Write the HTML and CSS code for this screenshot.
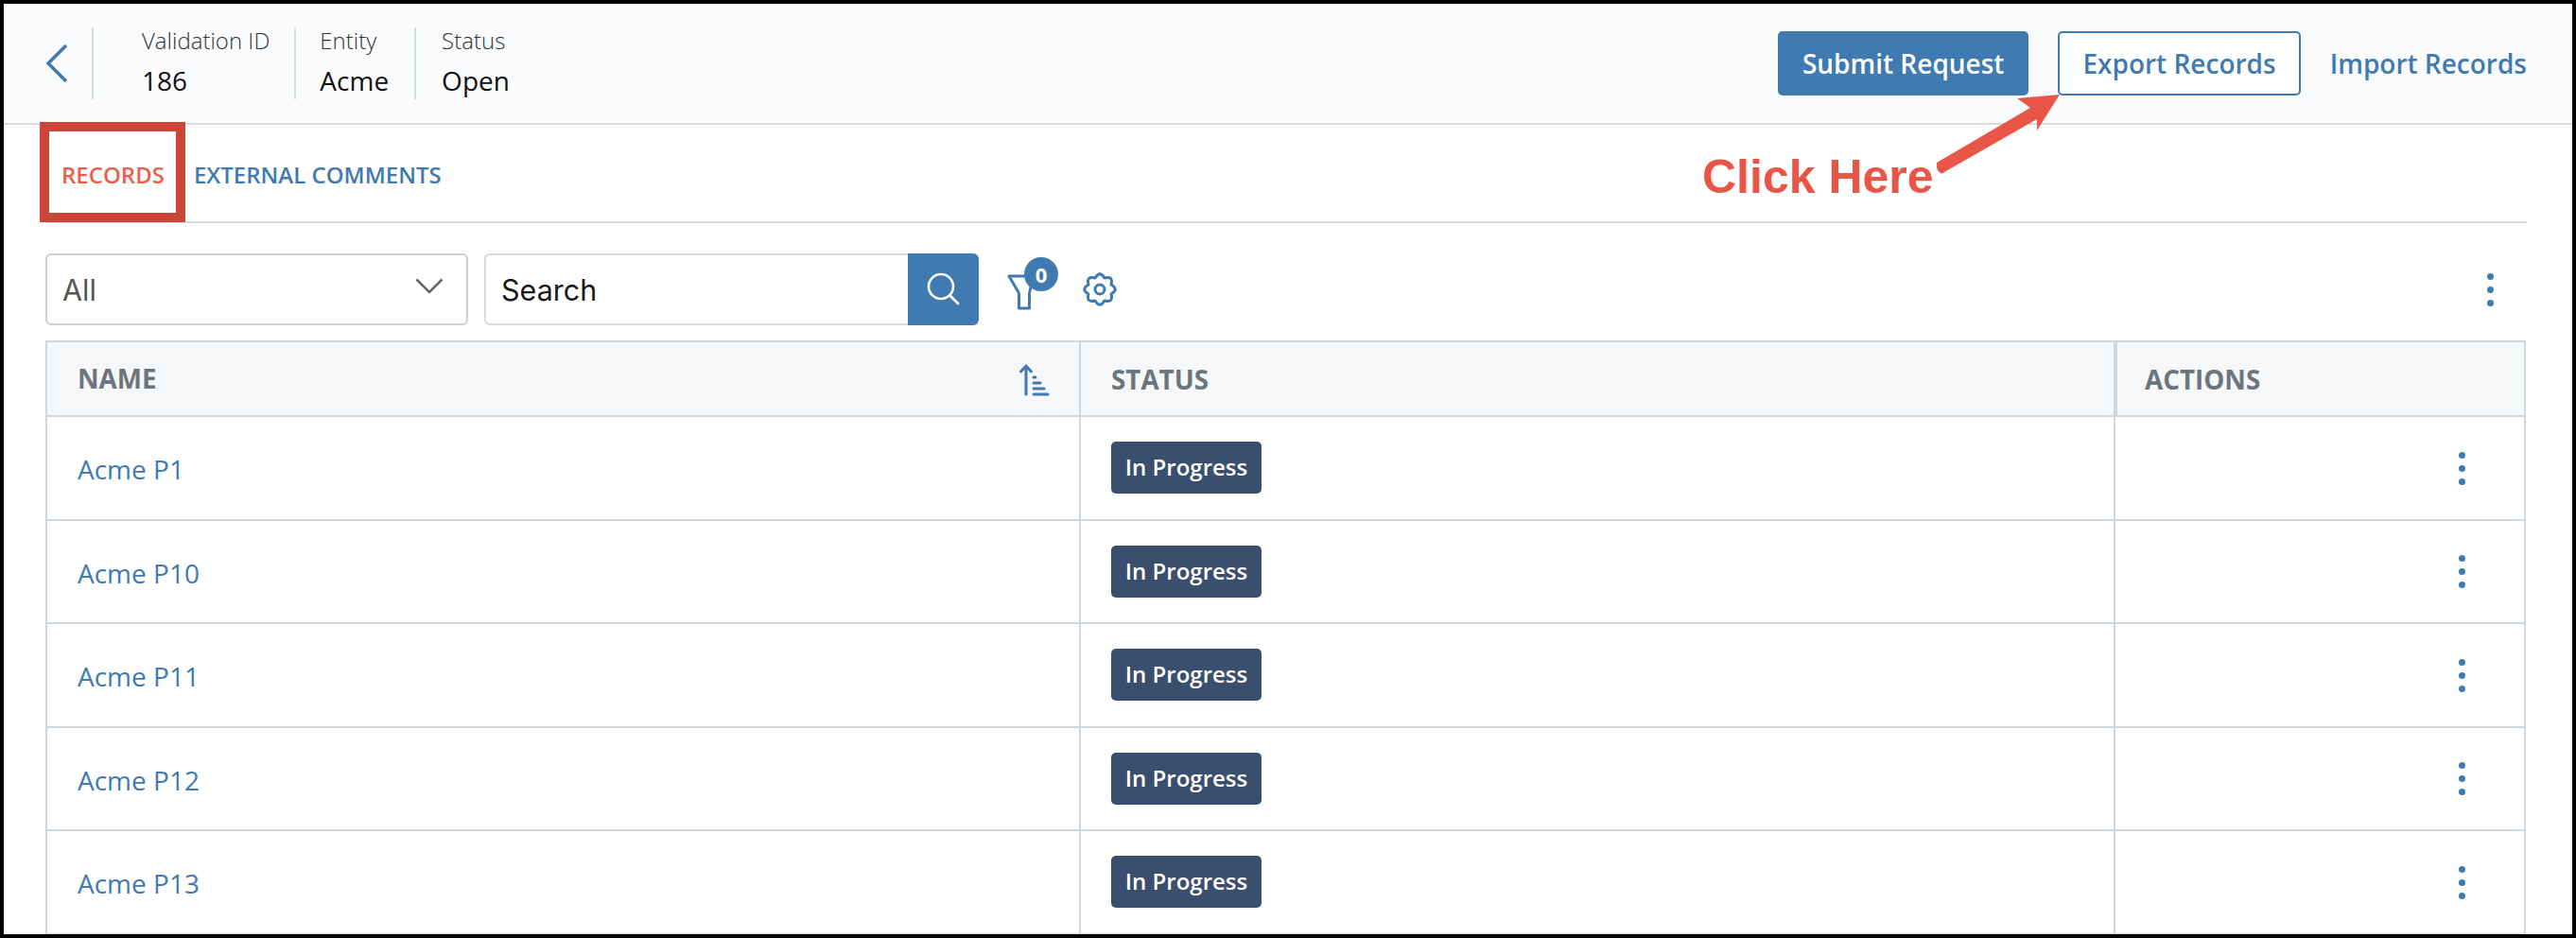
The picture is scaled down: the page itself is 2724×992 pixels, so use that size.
FILE: index.html
```html
<!DOCTYPE html>
<html lang="en">
<head>
<meta charset="utf-8">
<title>Validation 186</title>
<link rel="stylesheet" href="styles.css">
</head>
<body>
<div class="frame">
  <header class="topbar">
    <a class="back" href="#"><svg width="24" height="42" viewBox="0 0 24 42"><path d="M22 2 3 21l19 19" fill="none" stroke="#3f7ab0" stroke-width="3.6"/></svg></a>
    <div class="meta meta-first"><span class="meta-label">Validation ID</span><span class="meta-value">186</span></div>
    <div class="meta"><span class="meta-label">Entity</span><span class="meta-value">Acme</span></div>
    <div class="meta meta-last"><span class="meta-label">Status</span><span class="meta-value">Open</span></div>
    <div class="actions">
      <button class="btn btn-primary">Submit Request</button>
      <button class="btn btn-outline">Export Records</button>
      <a class="btn-link" href="#">Import Records</a>
    </div>
  </header>

  <nav class="tabs">
    <a class="tab tab-active" href="#">RECORDS</a>
    <a class="tab" href="#">EXTERNAL COMMENTS</a>
  </nav>

  <div class="toolbar">
    <div class="select"><span>All</span><svg class="select-caret" width="30" height="17" viewBox="0 0 30 17"><path d="M1.5 1.5 15 15 28.5 1.5" fill="none" stroke="#666" stroke-width="2.6"/></svg></div>
    <div class="search"><div class="search-input">Search</div>
      <button class="search-btn"><svg width="44" height="44" viewBox="0 0 44 44"><circle cx="19" cy="19" r="13" fill="none" stroke="#fff" stroke-width="2.6"/><path d="M28.5 28.5 37 37" stroke="#fff" stroke-width="2.8" stroke-linecap="round"/></svg></button>
    </div>
    <div class="filter">
      <svg width="30" height="38" viewBox="0 0 30 38"><path d="M2 2h26L23.5 20v16h-11V20z" fill="none" stroke="#3f7ab0" stroke-width="3" stroke-linejoin="round"/></svg>
      <span class="filter-badge">0</span>
    </div>
    <svg class="gear" width="40" height="40" viewBox="0 0 40 40" fill="none" stroke="#3f7ab0" stroke-width="3" stroke-linejoin="round"><path d="M24.98 7.99Q20-.5 15.02 7.99 5.500 5.500 7.99 15.02-.5 20 7.99 24.98 5.500 34.500 15.02 32.01 20 40.5 24.98 32.01 34.500 34.500 32.01 24.98 40.5 20 32.01 15.02 34.500 5.500 24.98 7.99Z"/><circle cx="20" cy="20" r="5"/></svg>
    <div class="kebab kebab-tool"><i></i><i></i><i></i></div>
  </div>

  <div class="table">
    <div class="row row-head">
      <div class="cell cell-name">NAME<svg class="sort-icon" width="34" height="34" viewBox="0 0 34 34" fill="none" stroke="#3f7ab0" stroke-linecap="round"><path d="M8 32V2M2.500 8 8 2l5.500 6" stroke-width="3"/><path d="M16 14h2M16 20h7M16 26h11M16 32h15" stroke-width="3"/></svg></div>
      <div class="cell">STATUS</div>
      <div class="cell cell-actions">ACTIONS</div>
    </div>
    <div class="row"><div class="cell"><a href="#">Acme P1</a></div><div class="cell"><span class="pill">In Progress</span></div><div class="cell"><div class="kebab"><i></i><i></i><i></i></div></div></div>
    <div class="row"><div class="cell"><a href="#">Acme P10</a></div><div class="cell"><span class="pill">In Progress</span></div><div class="cell"><div class="kebab"><i></i><i></i><i></i></div></div></div>
    <div class="row"><div class="cell"><a href="#">Acme P11</a></div><div class="cell"><span class="pill">In Progress</span></div><div class="cell"><div class="kebab"><i></i><i></i><i></i></div></div></div>
    <div class="row"><div class="cell"><a href="#">Acme P12</a></div><div class="cell"><span class="pill">In Progress</span></div><div class="cell"><div class="kebab"><i></i><i></i><i></i></div></div></div>
    <div class="row"><div class="cell"><a href="#">Acme P13</a></div><div class="cell"><span class="pill">In Progress</span></div><div class="cell"><div class="kebab"><i></i><i></i><i></i></div></div></div>
  </div>

  <div class="note-box"></div>
  <div class="note-text">Click Here</div>
  <svg class="note-arrow" width="150" height="100" viewBox="0 0 150 100"><path d="M134 4 89 8 103 18 4 76Q3 84 8 87Q10 88 12 86L110 30 110 42Z" fill="#e95546"/></svg>
</div>
</body>
</html>
```
FILE: styles.css
```css
* { box-sizing: border-box; }
html, body { margin: 0; padding: 0; background: #fff; }
body { font-family: "Open Sans", sans-serif; }
a { text-decoration: none; color: #3f7ab0; }

.frame {
  position: relative;
  width: 2724px;
  height: 992px;
  border: 4px solid #000;
  overflow: hidden;
  background: #fff;
}

/* top bar */
.topbar {
  display: flex;
  align-items: center;
  height: 128px;
  padding: 0 48px 0 44px;
  background: #fafbfd;
  border-bottom: 2px solid #d5dcdf;
}
.back { display: flex; width: 49px; }
.meta {
  display: flex;
  flex-direction: column;
  justify-content: flex-start;
  height: 76px;
  padding: 0 27px 0 25px;
  border-left: 2px solid #d5dcdf;
}
.meta-first { padding: 0 26px 0 51px; }
.meta-last { padding-left: 27px; }
.meta-label { margin-top: -3px; font-size: 24px; font-weight: 300; line-height: 33px; color: #333; }
.meta-value { margin-top: 7px; font-size: 28px; font-weight: 400; line-height: 38px; color: #111; }
.actions { display: flex; align-items: center; gap: 31px; margin-left: auto; }
.btn {
  height: 68px;
  padding: 0 24px;
  border-radius: 5px;
  border: 2px solid #3f7ab0;
  font: 600 28px "Open Sans", sans-serif;
}
.btn-primary { background: #3f7ab0; color: #fff; }
.btn-outline { background: #fff; color: #3f7ab0; }
.btn-link { font-size: 28px; font-weight: 600; color: #3f7ab0; }

/* tabs */
.tabs {
  display: flex;
  align-items: center;
  gap: 31px;
  height: 104px;
  margin: 0 48px 0 44px;
  padding: 2px 0 0 17px;
  border-bottom: 2px solid #d5dcdf;
}
.tab { font-size: 24px; font-weight: 600; color: #3f7ab0; }
.tab-active { color: #e95f4c; }

/* toolbar */
.toolbar { display: flex; align-items: center; height: 76px; margin: 32px 48px 16px 44px; }
.select {
  display: flex;
  align-items: center;
  justify-content: space-between;
  width: 447px;
  height: 76px;
  padding: 0 24px 0 16px;
  border: 2px solid #c9cfd3;
  border-radius: 6px;
  font: 400 30.5px "Inter", sans-serif;
  color: #555;
}
.select-caret { margin-bottom: 8px; }
.search { display: flex; height: 76px; margin-left: 17px; }
.search-input {
  display: flex;
  align-items: center;
  width: 448px;
  padding-left: 16px;
  border: 2px solid #d5dcdf;
  border-right: 0;
  border-radius: 6px 0 0 6px;
  font: 400 30.5px "Inter", sans-serif;
  color: #1a1a1a;
}
.search-btn {
  display: flex;
  align-items: center;
  justify-content: center;
  width: 75px;
  padding: 0;
  border: 0;
  border-radius: 0 6px 6px 0;
  background: #3f7ab0;
}
.filter { position: relative; display: flex; margin: 5px 0 0 30px; }
.filter-badge {
  position: absolute;
  left: 18px;
  top: -18px;
  width: 36px;
  height: 36px;
  border-radius: 50%;
  background: #3f7ab0;
  color: #fff;
  font-size: 22px;
  font-weight: 700;
  line-height: 36px;
  text-align: center;
}
.gear { margin-left: 48px; }
.kebab { display: flex; flex-direction: column; align-items: center; gap: 7px; }
.kebab i { display: block; width: 7px; height: 7px; border-radius: 50%; background: #3f7ab0; }
.kebab-tool { margin-left: auto; margin-right: 35px; }

/* table */
.table { width: 2623px; margin-left: 44px; border: 2px solid #d0d7dc; border-bottom: 0; }
.row {
  display: grid;
  grid-template-columns: 1091px 1094px 1fr;
  height: 109.5px;
  border-bottom: 2px solid #d0d7dc;
}
.row-head {
  height: 79px;
  background: #f6f7f9;
  font-weight: 700;
  color: #6c757d;
}
.cell {
  display: flex;
  align-items: center;
  padding-left: 32px;
  font-size: 28px;
  border-left: 2px solid #d0d7dc;
}
.row-head .cell { font-size: 27.8px; }
.cell:first-child { border-left: 0; }
.cell a { padding-top: 3px; color: #3f7ab0; }
.cell-name { justify-content: space-between; padding-right: 30px; padding-bottom: 2px; }
.cell-actions { border-left-width: 4px; padding-left: 29px; }
.sort-icon { margin-top: 4px; }
.cell .kebab { margin-left: 331px; padding-top: 1px; }
.pill {
  display: inline-block;
  height: 55px;
  width: 159px;
  border-radius: 5px;
  background: #3a4e6e;
  color: #fff;
  font-size: 24px;
  font-weight: 600;
  line-height: 54px;
  text-align: center;
}

/* annotations */
.note-box {
  position: absolute;
  left: 38px;
  top: 125px;
  width: 154px;
  height: 106px;
  border: 10px solid #cb4539;
}
.note-text {
  position: absolute;
  left: 1796px;
  top: 154px;
  font: 700 50px "Liberation Sans", sans-serif;
  color: #e95546;
}
.note-arrow { position: absolute; left: 2040px; top: 92px; }
```
